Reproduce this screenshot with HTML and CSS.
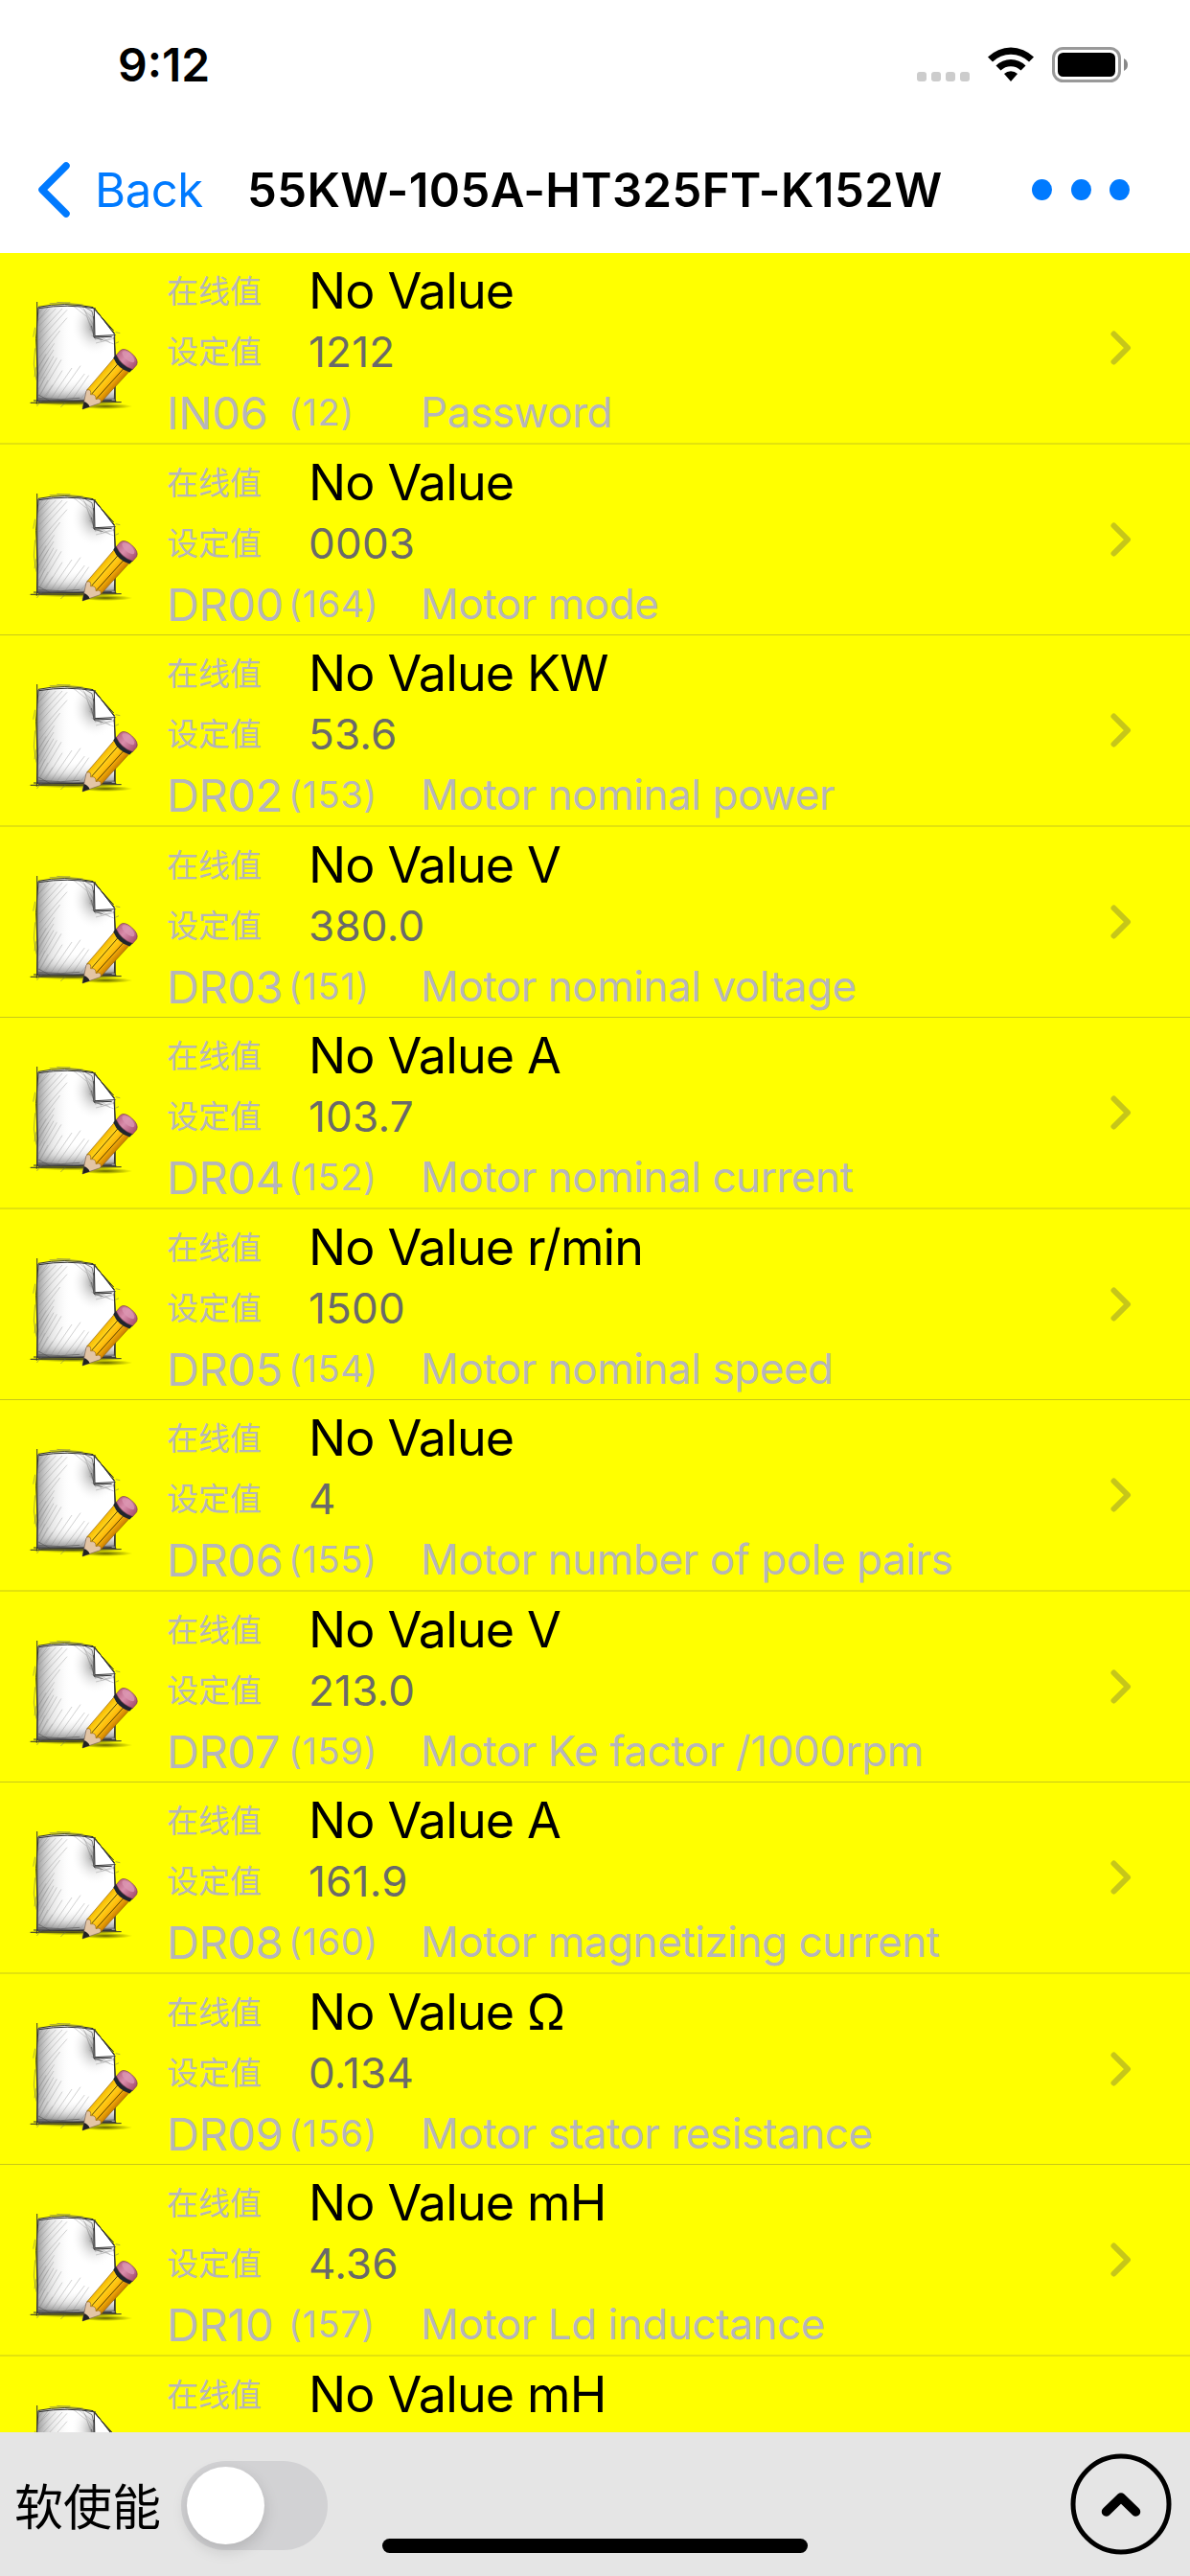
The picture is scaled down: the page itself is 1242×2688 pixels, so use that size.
FILE: index.html
```html
<!DOCTYPE html>
<html lang="en">
<head>
  <meta charset="UTF-8">
  <meta name="viewport" content="width=device-width, initial-scale=1.0">
  <title>55KW-105A-HT325FT-K152W</title>
  <link rel="stylesheet" href="styles.css">
</head>
<body>
  <!-- Shared icons -->
  <svg class="defs" width="0" height="0">
    <defs>
      <linearGradient id="pencilBody" x1="0" y1="0" x2="1" y2="0">
        <stop offset="0" stop-color="#f5b800"/>
        <stop offset="0.3" stop-color="#ffd21a"/>
        <stop offset="0.6" stop-color="#fdbb0c"/>
        <stop offset="1" stop-color="#c97a00"/>
      </linearGradient>
      <linearGradient id="eraser" x1="0" y1="0" x2="1" y2="0">
        <stop offset="0" stop-color="#bd6684"/>
        <stop offset="0.4" stop-color="#d98dab"/>
        <stop offset="1" stop-color="#a84f70"/>
      </linearGradient>
      <linearGradient id="shadeLeft" x1="0" y1="0" x2="1" y2="0">
        <stop offset="0" stop-color="#777" stop-opacity="0.75"/>
        <stop offset="0.2" stop-color="#bbb" stop-opacity="0.35"/>
        <stop offset="0.45" stop-color="#fff" stop-opacity="0"/>
      </linearGradient>
      <linearGradient id="shadeBottom" x1="0" y1="1" x2="0" y2="0">
        <stop offset="0" stop-color="#666" stop-opacity="0.8"/>
        <stop offset="0.12" stop-color="#bbb" stop-opacity="0.35"/>
        <stop offset="0.25" stop-color="#fff" stop-opacity="0"/>
      </linearGradient>
      <radialGradient id="shadeFold" cx="0.74" cy="0.22" r="0.3">
        <stop offset="0" stop-color="#777" stop-opacity="0.8"/>
        <stop offset="1" stop-color="#fff" stop-opacity="0"/>
      </radialGradient>
      <radialGradient id="ground">
        <stop offset="0" stop-color="#3a3a00" stop-opacity="0.8"/>
        <stop offset="1" stop-color="#3a3a00" stop-opacity="0"/>
      </radialGradient>
    </defs>
    <symbol id="note" viewBox="0 0 420 480">
      <ellipse cx="170" cy="391" rx="145" ry="9" fill="url(#ground)"/>
      <ellipse cx="270" cy="402" rx="85" ry="9" fill="url(#ground)"/>
      <path d="M58 92Q140 76 233 93L300 176V387H55Z" fill="#fff"/>
      <path d="M58 92Q140 76 233 93L300 176V387H55Z" fill="url(#shadeLeft)"/>
      <path d="M58 92Q140 76 233 93L300 176V387H55Z" fill="url(#shadeBottom)"/>
      <path d="M58 92Q140 76 233 93L300 176V387H55Z" fill="url(#shadeFold)"/>
      <g fill="none" stroke="#888" stroke-width="1.6" opacity="0.7">
        <path d="M62 130L95 98M62 150L115 96M64 172L135 96M62 195L150 100M64 222L150 125M62 250L128 165M62 275L110 205M60 300L108 225M62 325L108 245M60 348L118 250M62 372L132 256M78 380L135 290M98 380L165 282M118 380L192 275M142 382L205 300M165 382L218 305M190 382L235 325"/>
        <path d="M170 88L210 120M185 88L232 125M198 90L234 150M205 100L233 180M212 120L240 195M220 140L258 200M220 160L285 203M226 180L299 208M240 204L297 190M262 198L297 185"/>
        <path d="M58 115L75 94M58 135L90 92M58 285L84 238M58 310L92 250M58 360L80 310M58 380L90 320M70 384L105 335"/>
      </g>
      <g fill="none" stroke="#555" stroke-width="2">
        <path d="M60 366L98 386M60 376L130 380L190 376M60 380L170 384L298 378M206 92L228 104L234 130M226 150L236 188L262 194"/>
      </g>
      <path d="M235 95L299 177L234 182Z" fill="#fff"/>
      <path d="M235 95L299 174M238 98L301 180M228 90L296 165M235 97L237 182L299 179M234 120L234 186L290 184" fill="none" stroke="#333" stroke-width="3"/>
      <path d="M60 91Q140 74 232 92M62 95Q150 80 240 96M56 75L57 387M60 92L53 190L58 300L55 395M299 178L301 388M297 185L302 250L298 380M45 384L304 386M35 391L320 389M60 388L290 383" fill="none" stroke="#333" stroke-width="3"/>
      <path d="M50 155L44 185M50 220L46 270L54 320M52 280L48 310M95 80L160 77M118 76L200 84M302 170L316 173M301 205L312 200M70 384L55 402M145 390L130 405" fill="none" stroke="#666" stroke-width="1.5"/>
      <!-- pencil, drawn upright and tilted -->
      <g transform="translate(198 411) rotate(41.5) scale(1.22 1.05)">
        <path d="M0 0L-23 -47Q-25 -57 -22 -61L22 -61Q25 -55 23 -47Z" fill="#e3c5a5" stroke="#6b5340" stroke-width="1.5"/>
        <path d="M0 0L-10 -20Q0 -25 10 -20Z" fill="#222"/>
        <path d="M-26 -178L26 -178L24 -52Q16 -64 9 -49Q0 -62 -9 -49Q-17 -64 -24 -52Z" fill="url(#pencilBody)" stroke="#8a5a00" stroke-width="1.5"/>
        <path d="M-8 -53L-9 -174M9 -53L10 -174" stroke="#4a3600" stroke-width="2.2" fill="none"/>
        <path d="M-28 -176Q0 -160 28 -176L29 -190Q0 -175 -28 -190Z" fill="#20252e"/>
        <path d="M-27 -188Q0 -174 29 -188L29 -206Q25 -222 0 -222Q-25 -222 -27 -206Z" fill="url(#eraser)" stroke="#6f3048" stroke-width="1.5"/>
        <ellipse cx="-1" cy="-208" rx="20" ry="10" fill="#dc98b3" opacity="0.75"/>
      </g>
    </symbol>
    <symbol id="chevron" viewBox="0 0 22 36">
      <path d="M3.5 3.5L18 18L3.5 32.5" fill="none" stroke="#c6c61a" stroke-width="6" stroke-linecap="round" stroke-linejoin="round"/>
    </symbol>
  </svg>

  <header class="status-bar">
    <span class="time">9:12</span>
    <div class="status-icons">
      <div class="signal"><i></i><i></i><i></i><i></i></div>
      <svg class="wifi" width="48" height="36" viewBox="0 0 48 36">
        <path d="M0 10.5A34 34 0 0 1 48 10.5L43 15.5A27 27 0 0 0 5 15.5Z"/>
        <path d="M8.5 19.5A22 22 0 0 1 39.5 19.5L34.5 24.5A15 15 0 0 0 13.5 24.5Z"/>
        <path d="M17 28A10.5 10.5 0 0 1 31 28L24 36Z"/>
      </svg>
      <svg class="battery" width="80" height="37" viewBox="0 0 80 37">
        <rect x="1.5" y="1.5" width="69" height="34" rx="10" fill="none" stroke="#999" stroke-width="3"/>
        <rect x="6" y="6" width="60" height="25" rx="5.5"/>
        <path d="M75 12Q79 14 79 18.5Q79 23 75 25Z" fill="#888"/>
      </svg>
    </div>
  </header>

  <nav class="nav-bar">
    <a href="#" class="back">
      <svg width="36" height="58" viewBox="0 0 36 58"><path d="M31 4L6 29L31 54" fill="none" stroke="#007aff" stroke-width="7.5" stroke-linecap="round" stroke-linejoin="round"/></svg>
      <span>Back</span>
    </a>
    <h1 class="title">55KW-105A-HT325FT-K152W</h1>
    <div class="more"><i></i><i></i><i></i></div>
  </nav>

  <main class="list" id="list"></main>

  <footer class="toolbar">
    <span class="toolbar-label">软使能</span>
    <div class="switch"><div class="knob"></div></div>
    <div class="home-indicator"></div>
    <svg class="top-button" width="106" height="106" viewBox="0 0 106 106">
      <circle cx="53" cy="53" r="50" fill="none" stroke="#000" stroke-width="5"/>
      <path d="M37.5 61L53 46L68.5 61" fill="none" stroke="#000" stroke-width="9.5" stroke-linecap="round" stroke-linejoin="round"/>
    </svg>
  </footer>

  <script>
    // code, address, name, set value, unit
    const params = [
      ['IN06', 12, 'Password', '1212', ''],
      ['DR00', 164, 'Motor mode', '0003', ''],
      ['DR02', 153, 'Motor nominal power', '53.6', 'KW'],
      ['DR03', 151, 'Motor nominal voltage', '380.0', 'V'],
      ['DR04', 152, 'Motor nominal current', '103.7', 'A'],
      ['DR05', 154, 'Motor nominal speed', '1500', 'r/min'],
      ['DR06', 155, 'Motor number of pole pairs', '4', ''],
      ['DR07', 159, 'Motor Ke factor /1000rpm', '213.0', 'V'],
      ['DR08', 160, 'Motor magnetizing current', '161.9', 'A'],
      ['DR09', 156, 'Motor stator resistance', '0.134', 'Ω'],
      ['DR10', 157, 'Motor Ld inductance', '4.36', 'mH'],
      ['', '', '', '', 'mH']
    ];

    document.getElementById('list').innerHTML = params.map(([code, addr, name, value, unit]) => `
      <div class="row">
        <svg class="note"><use href="#note"/></svg>
        <div class="info">
          <div class="line"><span class="label">在线值</span><span class="online">No Value ${unit}</span></div>
          ${code ? `<div class="line"><span class="label">设定值</span><span class="setting">${value}</span></div>
          <div class="line"><span class="code">${code}</span><span class="addr">(${addr})</span><span class="name">${name}</span></div>` : ''}
        </div>
        ${code ? '<svg class="chevron"><use href="#chevron"/></svg>' : ''}
      </div>`).join('');
  </script>
</body>
</html>
```
FILE: styles.css
```css
* {
  margin: 0;
  padding: 0;
  box-sizing: border-box;
}

body {
  width: 1242px;
  height: 2688px;
  display: flex;
  flex-direction: column;
  overflow: hidden;
  background: #fff;
  color: #000;
  font-family: Inter, "Noto Sans CJK SC", sans-serif;
}

.defs {
  position: absolute;
}

/* Status bar */
.status-bar {
  height: 132px;
  padding: 49px 64px 0 123px;
  display: flex;
  justify-content: space-between;
  align-items: flex-start;
}

.time {
  font-size: 48px;
  font-weight: 600;
  line-height: 38px;
}

.status-icons {
  display: flex;
  align-items: flex-start;
}

.signal {
  display: flex;
  gap: 5px;
  margin: 26px 19px 0 0;
}

.signal i {
  width: 10px;
  height: 10px;
  border-radius: 3px;
  background: #ccc;
}

.battery {
  margin-left: 19px;
}

/* Navigation bar */
.nav-bar {
  height: 132px;
  padding: 0 63px 0 38px;
  display: flex;
  align-items: center;
}

.back {
  width: 220px;
  display: flex;
  align-items: center;
  gap: 25px;
  color: #007aff;
  font-size: 49px;
  letter-spacing: -0.4px;
  text-decoration: none;
}

.title {
  flex: 1;
  font-size: 49px;
  font-weight: 600;
  letter-spacing: 0.4px;
  white-space: nowrap;
}

.more {
  display: flex;
  gap: 19.5px;
}

.more i {
  width: 21px;
  height: 22px;
  border-radius: 50%;
  background: #007aff;
}

/* Parameter list */
.list {
  height: 2274px;
  overflow: hidden;
  background: #ffff00;
}

.row {
  height: 200px;
  padding: 9px 61px 0 20px;
  display: flex;
  border-bottom: 2px solid #e3e30d;
}

.row:nth-child(even) {
  height: 199px;
  border-bottom: 1px solid #c8c81a;
}

.note {
  width: 140px;
  height: 160px;
  margin-top: 17px;
}

.info {
  flex: 1;
  padding-left: 14px;
}

.line {
  height: 63px;
  line-height: 63px;
  display: flex;
  white-space: nowrap;
  color: #b6b6ba;
}

.label {
  width: 148px;
  font-size: 33px;
}

.online {
  font-size: 52px;
  line-height: 62px;
  letter-spacing: -0.85px;
  color: #000;
}

.setting {
  font-size: 44px;
  letter-spacing: 0.2px;
  color: #6a6a6a;
}

.code {
  width: 127px;
  font-size: 47px;
  letter-spacing: -0.4px;
}

.addr {
  width: 138px;
  font-size: 38px;
  letter-spacing: 0.6px;
}

.name {
  font-size: 44px;
  letter-spacing: -0.45px;
}

.chevron {
  width: 22px;
  height: 36px;
  margin-top: 72px;
}

/* Bottom toolbar */
.toolbar {
  position: relative;
  height: 150px;
  padding: 22px 19px 0 15px;
  display: flex;
  align-items: flex-start;
  background: #e5e5e5;
}

.toolbar-label {
  width: 174px;
  font-size: 51px;
  line-height: 113px;
}

.switch {
  width: 153px;
  height: 93px;
  margin-top: 8px;
  padding: 6px;
  border-radius: 47px;
  background: #d2d2d4;
}

.knob {
  width: 81px;
  height: 81px;
  border-radius: 50%;
  background: #fff;
  box-shadow: 0 6px 16px rgba(0, 0, 0, 0.15);
}

.top-button {
  margin-left: auto;
}

.home-indicator {
  position: absolute;
  left: 399px;
  bottom: 24px;
  width: 444px;
  height: 15px;
  border-radius: 8px;
  background: #000;
}
```
